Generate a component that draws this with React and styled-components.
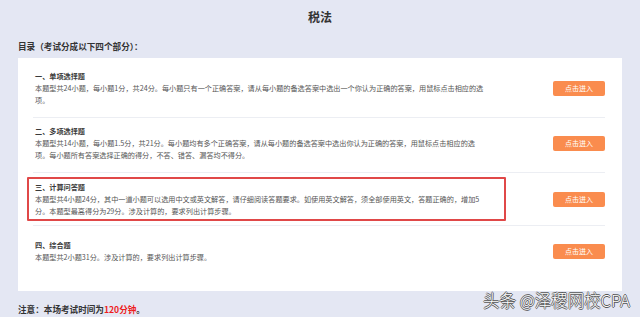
import React from "react";
import styled, { createGlobalStyle, css } from "styled-components";

const GlobalStyle = createGlobalStyle`
  html, body {
    margin: 0;
    padding: 0;
    background: #e4e7f3;
    overflow: hidden;
  }
  body {
    font-family: "Noto Sans CJK SC", "Noto Sans", sans-serif;
  }
`;

const sections = [
  {
    title: "一、单项选择题",
    lines: [
      "本题型共24小题，每小题1分，共24分。每小题只有一个正确答案，请从每小题的备选答案中选出一个你认为正确的答案，用鼠标点击相应的选",
      "项。",
    ],
    pad: "12px 0 11px",
  },
  {
    title: "二、多项选择题",
    lines: [
      "本题型共14小题，每小题1.5分，共21分。每小题均有多个正确答案，请从每小题的备选答案中选出你认为正确的答案，用鼠标点击相应的选",
      "项。每小题所有答案选择正确的得分，不答、错答、漏答均不得分。",
    ],
    pad: "7px 0 11px",
  },
  {
    title: "三、计算问答题",
    lines: [
      "本题型共4小题24分，其中一道小题可以选用中文或英文解答，请仔细阅读答题要求。如使用英文解答，须全部使用英文，答题正确的，增加5",
      "分。本题型最高得分为29分。涉及计算的，要求列出计算步骤。",
    ],
    pad: "4px 0 4px",
    marked: true,
  },
  {
    title: "四、综合题",
    lines: ["本题型共2小题31分。涉及计算的，要求列出计算步骤。"],
    pad: "13px 0 12px",
  },
];

export default function App() {
  return (
    <Page>
      <GlobalStyle />
      <Title>税法</Title>
      <Heading>目录（考试分成以下四个部分）：</Heading>
      <Card>
        {sections.map((s) => (
          <Row key={s.title} $pad={s.pad}>
            <Info $marked={s.marked}>
              <SectionTitle>{s.title}</SectionTitle>
              {s.lines.map((l) => (
                <Line key={l}>{l}</Line>
              ))}
            </Info>
            <EnterButton>点击进入</EnterButton>
          </Row>
        ))}
      </Card>
      <Notice>
        注意：本场考试时间为<Red>120分钟</Red>。
      </Notice>
      <Watermark>头条 @泽稷网校CPA</Watermark>
    </Page>
  );
}

const Page = styled.div`
  position: relative;
  height: 317px;
  box-sizing: border-box;
  padding: 10px 18px 0;
`;

const Title = styled.h1`
  margin: 0;
  text-align: center;
  font-size: 12px;
  line-height: 14px;
  font-weight: 700;
  color: #333;
`;

const Heading = styled.h2`
  margin: 16px 0 0;
  font-size: 8.6px;
  line-height: 12px;
  font-weight: 700;
  color: #333;
`;

const Card = styled.div`
  margin-top: 6px;
  background: #fff;
  padding: 0 17px 16px 15px;
`;

const Row = styled.div`
  display: flex;
  align-items: center;
  justify-content: space-between;
  padding: ${(p) => p.$pad};
  border-bottom: 1px solid #eceef3;
  &:last-child {
    border-bottom: none;
  }
`;

const Info = styled.div`
  padding-left: 2px;
  ${(p) =>
    p.$marked &&
    css`
      margin-left: -6px;
      padding: 2px 25px 2px 6px;
      border: 2px solid #e04848;
      border-radius: 1px;
    `}
`;

const SectionTitle = styled.div`
  font-size: 7.15px;
  line-height: 12px;
  font-weight: 700;
  color: #3a3a3a;
  white-space: nowrap;
`;

const Line = styled.div`
  font-size: 7.15px;
  line-height: 12px;
  color: #555;
  white-space: nowrap;
`;

const EnterButton = styled.button`
  flex: none;
  width: 52px;
  height: 15px;
  padding: 0;
  border: none;
  border-radius: 2px;
  background: #fa8c4e;
  color: #fff;
  font-family: inherit;
  font-size: 7px;
  line-height: 15px;
`;

const Notice = styled.p`
  margin: 12px 0 0;
  font-size: 8.6px;
  line-height: 12px;
  font-weight: 700;
  color: #333;
`;

const Red = styled.span`
  color: #ee1c1c;
`;

const Watermark = styled.div`
  position: absolute;
  right: 10px;
  bottom: 8px;
  font-size: 16.5px;
  line-height: 18px;
  font-weight: 300;
  color: #fff;
  text-shadow: 0.8px 0 0 #555, -0.8px 0 0 #555, 0 0.8px 0 #555, 0 -0.8px 0 #555;
`;
